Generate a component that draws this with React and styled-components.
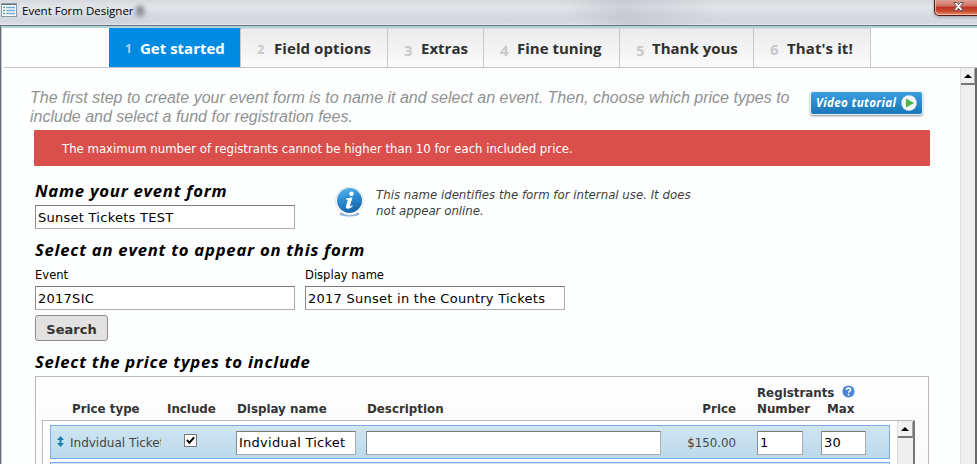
import React from "react";
import styled, { createGlobalStyle } from "styled-components";

const verdana = '"DejaVu Sans", sans-serif';
const trebuchet = '"Open Sans", sans-serif';

const GlobalStyle = createGlobalStyle`
  *, *::before, *::after { box-sizing: border-box; }
  body { margin: 0; overflow: hidden; background: #fdfefe; }
  input, button { font: inherit; margin: 0; }
`;

const Window = styled.div`
  width: 977px;
  height: 464px;
  display: flex;
  flex-direction: column;
  overflow: hidden;
  background: #fdfefe;
  font-family: ${verdana};
  color: #000;
`;

const TitleBar = styled.header`
  flex: none;
  height: 25px;
  display: flex;
  align-items: flex-start;
  background:
    radial-gradient(ellipse 70px 14px at 95px 18px, rgba(185, 190, 199, 0.35), transparent),
    linear-gradient(70deg, transparent 535px, rgba(170, 175, 183, 0.35) 590px, transparent 680px),
    linear-gradient(180deg, #d6d9dd 0%, #e2e4e8 28%, #d5d9e0 62%, #d4d8df 92%, #eceef1 100%);
`;

const WindowIcon = styled.svg`
  width: 16px;
  height: 14px;
  margin: 3px 5px 0 1px;
`;

const Title = styled.h1`
  flex: 1;
  margin: 3px 0 0;
  font: 400 11.5px/16px ${trebuchet};
  text-shadow: 0 0 6px #fff;
`;

const TitleSmudge = styled.span`
  display: inline-block;
  width: 8px;
  height: 10px;
  margin-left: 2px;
  vertical-align: -1px;
  background: #8c8f95;
  filter: blur(2px);
`;

const CloseButton = styled.button`
  width: 47px;
  height: 16px;
  margin-right: -4px;
  padding: 0;
  display: flex;
  justify-content: center;
  border: 1px solid #501b16;
  border-top: 0;
  border-radius: 0 0 0 5px;
  background: linear-gradient(180deg, #dfa095 0%, #cf705f 42%, #b83320 46%, #cb4a30 75%, #e8906d 100%);
  box-shadow: inset 1px -1px 0 rgba(255, 215, 200, 0.65), 0 1px 3px rgba(60, 60, 60, 0.4);
  svg { width: 13px; height: 11px; margin: 1px 0 0 2px; }
`;

const Frame = styled.div`
  flex: 1;
  min-height: 0;
  display: flex;
  flex-direction: column;
  border-top: 1px solid #65717c;
  border-left: 1px solid #6d6a78;
  box-shadow: inset 0 2px 0 #b0d3da, inset 1px 0 0 #bcc6cd;
  padding: 2px 0 0 3px;
`;

const Tabs = styled.nav`
  flex: none;
  height: 40px;
  display: flex;
  padding-left: 105px;
  border-bottom: 1px solid #c6c6c8;
`;

const Tab = styled.div`
  width: ${(p) => p.$width}px;
  height: 39px;
  padding-left: 16px;
  display: flex;
  align-items: center;
  border-right: 1px solid #c8c8ca;
  border-top: 1px solid ${(p) => (p.$active ? "#008be2" : "#d9dadb")};
  background: ${(p) => (p.$active ? "#008be2" : "linear-gradient(180deg, #ebebec, #fbfbfb)")};
  color: ${(p) => (p.$active ? "#fff" : "#303030")};
  font: 700 15px/22px ${trebuchet};
  white-space: nowrap;
`;

const TabNumber = styled.span`
  width: ${(p) => p.$gap}px;
  padding-top: ${(p) => (p.$drop ? 4 : 2)}px;
  color: ${(p) => (p.$active ? "#aad3f1" : "#c9c9ca")};
  font-size: ${(p) => p.$size}px;
  line-height: 20px;
`;

const TabLabel = styled.span`
  letter-spacing: ${(p) => p.$spacing || 0}px;
`;

const Viewport = styled.div`
  flex: 1;
  min-height: 0;
  display: flex;
`;

const Page = styled.main`
  width: 956px;
  padding: 20px 30px 0 31px;
`;

const ScrollBar = styled.div`
  width: ${(p) => p.$width}px;
  flex: none;
  background: #efefef;
  border-left: 1px solid #dedede;
  border-right: ${(p) => (p.$inner ? "2px solid #77777a" : "2px solid #696969")};
  padding-top: 1px;
`;

const ScrollUp = styled.div`
  height: 16px;
  display: flex;
  align-items: center;
  justify-content: center;
  background: #f1f1f1;
  border-right: 1px solid #a5a5a5;
  border-bottom: 2px solid #77777a;
  svg { width: 8px; height: 4px; }
`;

const IntroRow = styled.div`
  height: 42px;
  display: flex;
  justify-content: space-between;
`;

const Intro = styled.p`
  width: 770px;
  margin: 0 0 0 -5px;
  font: italic 400 16px/19px "Liberation Sans", sans-serif;
  color: #929292;
  white-space: nowrap;
`;

const VideoButton = styled.a`
  width: 113px;
  height: 24px;
  margin: 3px 7px 0 0;
  padding-left: 5px;
  display: flex;
  align-items: center;
  border-radius: 3px;
  border: 1px solid #e8f2f8;
  background: linear-gradient(180deg, #3a9fdf, #1b76b6);
  box-shadow: 0 1px 2px rgba(70, 80, 90, 0.65);
  color: #fff;
  font: italic 700 11.6px/18px ${trebuchet};
  letter-spacing: 0.36px;
  white-space: nowrap;
  svg { width: 16px; height: 16px; margin-left: 5px; flex: none; }
`;

const Alert = styled.div`
  width: 896px;
  height: 36px;
  margin-left: -1px;
  padding-left: 28px;
  border-radius: 1px;
  background: #da4f4c;
  color: #fff;
  font-size: 11.72px;
  line-height: 38px;
`;

const Heading = styled.h2`
  height: 26px;
  margin: ${(p) => p.$top}px 0 0;
  font: italic 700 16.7px/25px ${trebuchet};
  letter-spacing: 0.74px;
  white-space: nowrap;
`;

const NameRow = styled.div`
  display: flex;
  height: 63px;
`;

const NameColumn = styled.div`
  width: 300px;
`;

const Input = styled.input`
  display: block;
  width: ${(p) => p.$width}px;
  height: 24px;
  padding: 0 2px;
  border: 1px solid #acacac;
  border-top-color: #7a7a7a;
  border-left-color: #8c8c8c;
  border-radius: 0;
  outline: 0;
  background: #fff;
  color: #000;
  font-family: ${verdana};
  font-size: 13px;
  letter-spacing: 0.26px;
  margin-top: ${(p) => p.$top || 0}px;
  margin-left: ${(p) => p.$left || 0}px;
`;

const Hint = styled.div`
  display: flex;
  gap: 11px;
  padding-top: 20px;
  color: #3e3e3e;
  font: italic 400 11.78px/16px ${verdana};
  svg { width: 30px; height: 32px; }
  p { margin: 1px 0 0; }
`;

const Fields = styled.div`
  display: flex;
  gap: 10px;
  padding-top: 3px;
`;

const Field = styled.label`
  font-size: 11.55px;
  line-height: 18px;
  span { display: block; height: 20px; }
`;

const SearchButton = styled.button`
  display: block;
  width: 73px;
  height: 26px;
  margin-top: 5px;
  padding: 3px 0 0;
  border: 1px solid #8d8d8d;
  border-radius: 3px;
  background: #e2e2e2;
  color: #333;
  font: 700 13px/20px ${verdana};
`;

const PricePanel = styled.section`
  width: 894px;
  height: 120px;
  margin-top: 1px;
  padding-left: 6px;
  border: 1px solid #b9b9bd;
  background: linear-gradient(180deg, #fefefe, #f9f9fb);
`;

const TableHead = styled.div`
  height: 43px;
  padding: 0 0 3px 30px;
  display: grid;
  grid-template-columns: 95px 70px 130px 300px 69px auto;
  align-items: end;
  color: #333;
  font-size: 11.85px;
  font-weight: 700;
  line-height: 16px;
  white-space: nowrap;
`;

const Cell = styled.span`
  text-align: ${(p) => (p.$right ? "right" : "left")};
`;

const Registrants = styled.div`
  padding-left: 21px;
  display: grid;
  grid-template-columns: 70px auto;
  grid-template-rows: 16px 16px;
`;

const RegistrantsTitle = styled.div`
  grid-column: 1 / 3;
  display: flex;
  align-items: flex-start;
  gap: 8px;
  svg { width: 13px; height: 13px; }
`;

const TableBody = styled.div`
  width: 873px;
  height: 80px;
  display: flex;
  justify-content: space-between;
  border: 1px solid #b9b9bd;
  border-right: 0;
  background: #fff;
`;

const Rows = styled.div`
  padding: 4px 0 0 7px;
  display: flex;
  flex-direction: column;
  gap: 3px;
`;

const PriceRow = styled.div`
  width: 840px;
  height: 34px;
  padding-top: 1px;
  display: flex;
  align-items: center;
  border: 1px solid #7aaae8;
  background: linear-gradient(180deg, #cfe5f2, #bbdaeb);
  color: #444;
  font-size: 11.8px;
`;

const DragIcon = styled.svg`
  width: 7px;
  height: 11px;
  margin: -2px 6px 0 6px;
`;

const PriceType = styled.span`
  width: 91px;
  overflow: hidden;
  white-space: nowrap;
  font-size: 12px;
  line-height: 18px;
`;

const CheckBox = styled.span`
  width: 13px;
  height: 13px;
  margin: -4px 39px 0 23px;
  display: flex;
  background: #fff;
  border: 1px solid #777;
  svg { width: 11px; height: 11px; }
`;

const Amount = styled.span`
  width: 75px;
  padding-top: 1px;
  text-align: right;
`;

const tabs = [
  { n: 1, label: "Get started", width: 132, active: true, size: 12, gap: 15 },
  { n: 2, label: "Field options", width: 147, size: 13, gap: 17, spacing: 0.08 },
  { n: 3, label: "Extras", width: 96, drop: true, size: 15, gap: 17 },
  { n: 4, label: "Fine tuning", width: 136, drop: true, size: 15, gap: 17 },
  { n: 5, label: "Thank yous", width: 134, drop: true, size: 15, gap: 16 },
  { n: 6, label: "That's it!", width: 117, size: 15, gap: 17, spacing: 0.1 },
];

const UpArrow = () => (
  <svg viewBox="0 0 8 4"><path d="M0 4L4 0L8 4Z" fill="#000" /></svg>
);

const InfoIcon = () => (
  <svg viewBox="0 0 30 32">
    <defs>
      <linearGradient id="info" x1="0" y1="0" x2="0.3" y2="1">
        <stop offset="0" stopColor="#62bbed" />
        <stop offset="0.5" stopColor="#2c8dd3" />
        <stop offset="1" stopColor="#1969ad" />
      </linearGradient>
    </defs>
    <ellipse cx="14.5" cy="28" rx="10" ry="2.4" fill="#8eb3d9" />
    <circle cx="14.5" cy="15" r="14" fill="#fff" stroke="#d4dce4" strokeWidth="0.8" />
    <circle cx="14.5" cy="14.5" r="12.5" fill="url(#info)" />
    <circle cx="16.5" cy="7.8" r="2.2" fill="#fff" />
    <path d="M11 12.3Q14 12 17.5 11.2L15.1 19.5Q14.8 20.8 15.8 20.3L17.2 19.2L17.9 20Q15.5 22.9 12.8 22.7Q10.3 22.4 11.2 19.5L12.6 14.4Q12.9 13.4 11.9 13.4L10.8 13.5Z" fill="#fff" />
  </svg>
);

export default function App() {
  return (
    <>
      <GlobalStyle />
      <Window>
        <TitleBar>
          <WindowIcon viewBox="0 0 16 14">
            <rect x="0.5" y="0.5" width="15" height="13" fill="#fbfdfe" stroke="#8a9aa5" />
            <path d="M1 1.5H15" stroke="#59707f" />
            <path d="M2 4.5H4M2 7.5H4M2 10.5H4" stroke="#5da56c" strokeWidth="1.4" />
            <path d="M5 4.5H14M5 7.5H14M5 10.5H14" stroke="#71a9d7" strokeWidth="1.4" />
          </WindowIcon>
          <Title>Event Form Designer<TitleSmudge /></Title>
          <CloseButton aria-label="Close">
            <svg viewBox="0 0 13 11">
              <path d="M1.5 1.5H4.7L6.5 3.7L8.3 1.5H11.5L8.2 5.5L11.5 9.5H8.3L6.5 7.3L4.7 9.5H1.5L4.8 5.5Z" fill="#fff" stroke="#52474a" strokeWidth="0.9" />
            </svg>
          </CloseButton>
        </TitleBar>
        <Frame>
          <Tabs>
            {tabs.map((t) => (
              <Tab key={t.n} $width={t.width} $active={t.active}>
                <TabNumber $active={t.active} $drop={t.drop} $size={t.size} $gap={t.gap}>{t.n}</TabNumber>
                <TabLabel $spacing={t.spacing}>{t.label}</TabLabel>
              </Tab>
            ))}
          </Tabs>
          <Viewport>
            <Page>
              <IntroRow>
                <Intro>
                  The first step to create your event form is to name it and select an event. Then, choose which price types to
                  <br />
                  include and select a fund for registration fees.
                </Intro>
                <VideoButton>
                  Video tutorial
                  <svg viewBox="0 0 16 16">
                    <circle cx="8" cy="8" r="7.7" fill="#f3f7f8" />
                    <path d="M5 3.6L13 8L5 12.4Z" fill="#4cb648" />
                  </svg>
                </VideoButton>
              </IntroRow>
              <Alert>The maximum number of registrants cannot be higher than 10 for each included price.</Alert>
              <NameRow>
                <NameColumn>
                  <Heading $top={12}>Name your event form</Heading>
                  <Input $width={260} $top={1} defaultValue="Sunset Tickets TEST" />
                </NameColumn>
                <Hint>
                  <InfoIcon />
                  <p>This name identifies the form for internal use. It does<br />not appear online.</p>
                </Hint>
              </NameRow>
              <Heading $top={8}>Select an event to appear on this form</Heading>
              <Fields>
                <Field><span>Event</span><Input $width={260} defaultValue="2017SIC" /></Field>
                <Field><span>Display name</span><Input $width={260} defaultValue="2017 Sunset in the Country Tickets" /></Field>
              </Fields>
              <SearchButton>Search</SearchButton>
              <Heading $top={8}>Select the price types to include</Heading>
              <PricePanel>
                <TableHead>
                  <Cell>Price type</Cell>
                  <Cell>Include</Cell>
                  <Cell>Display name</Cell>
                  <Cell>Description</Cell>
                  <Cell $right>Price</Cell>
                  <Registrants>
                    <RegistrantsTitle>
                      Registrants
                      <svg viewBox="0 0 13 13">
                        <circle cx="6.5" cy="6.5" r="6.1" fill="#4c84d8" />
                        <path d="M4.4 5Q4.5 3.1 6.6 3.1Q8.7 3.2 8.6 4.9Q8.4 5.9 7.2 6.5Q6.6 6.9 6.6 7.8" fill="none" stroke="#fff" strokeWidth="1.5" />
                        <circle cx="6.6" cy="9.7" r="0.9" fill="#fff" />
                      </svg>
                    </RegistrantsTitle>
                    <Cell>Number</Cell>
                    <Cell>Max</Cell>
                  </Registrants>
                </TableHead>
                <TableBody>
                  <Rows>
                    <PriceRow>
                      <DragIcon viewBox="0 0 7 11">
                        <path d="M3.5 0L7 4H4.5V7H7L3.5 11L0 7H2.5V4H0Z" fill="#177fae" />
                      </DragIcon>
                      <PriceType>Indvidual Ticket</PriceType>
                      <CheckBox>
                        <svg viewBox="0 0 11 11"><path d="M2 5L4.4 7.8L9 2.4" fill="none" stroke="#000" strokeWidth="2" /></svg>
                      </CheckBox>
                      <Input $width={120} defaultValue="Indvidual Ticket" />
                      <Input $width={295} $left={10} />
                      <Amount>$150.00</Amount>
                      <Input $width={46} $left={21} defaultValue="1" />
                      <Input $width={45} $left={18} defaultValue="30" />
                    </PriceRow>
                    <PriceRow />
                  </Rows>
                  <ScrollBar $width={18} $inner><ScrollUp><UpArrow /></ScrollUp></ScrollBar>
                </TableBody>
              </PricePanel>
            </Page>
            <ScrollBar $width={17}><ScrollUp><UpArrow /></ScrollUp></ScrollBar>
          </Viewport>
        </Frame>
      </Window>
    </>
  );
}
